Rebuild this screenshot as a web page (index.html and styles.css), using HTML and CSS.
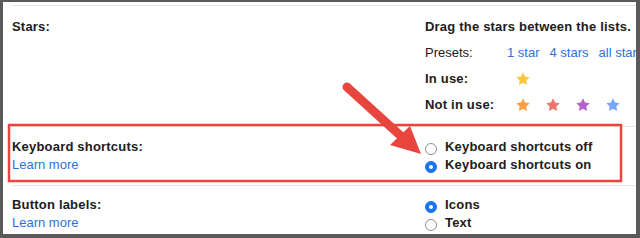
FILE: index.html
```html
<!DOCTYPE html>
<html>
<head>
<meta charset="utf-8">
<link rel="stylesheet" href="styles.css">
</head>
<body>
<div class="frame">
  <div class="panel">
    <section class="section sec-stars">
      <div class="label-col"><span class="title">Stars:</span></div>
      <div class="value-col">
        <div class="row"><span class="title">Drag the stars between the lists.</span></div>
        <div class="row">
          <span class="row-label">Presets:</span>
          <span class="links"><a class="link">1 star</a><a class="link">4 stars</a><a class="link">all stars</a></span>
        </div>
        <div class="row">
          <span class="row-label title">In use:</span>
          <span class="stars">
            <svg class="star" viewBox="0 0 24 24"><path fill="#f8c544" d="M12 2l3.09 6.26L22 9.27l-5 4.87 1.18 6.88L12 17.77l-6.18 3.25L7 14.14 2 9.27l6.91-1.01z"/></svg>
          </span>
        </div>
        <div class="row">
          <span class="row-label title">Not in use:</span>
          <span class="stars">
            <svg class="star" viewBox="0 0 24 24"><path fill="#f9a044" d="M12 2l3.09 6.26L22 9.27l-5 4.87 1.18 6.88L12 17.77l-6.18 3.25L7 14.14 2 9.27l6.91-1.01z"/></svg>
            <svg class="star" viewBox="0 0 24 24"><path fill="#e8776e" d="M12 2l3.09 6.26L22 9.27l-5 4.87 1.18 6.88L12 17.77l-6.18 3.25L7 14.14 2 9.27l6.91-1.01z"/></svg>
            <svg class="star" viewBox="0 0 24 24"><path fill="#b462c9" d="M12 2l3.09 6.26L22 9.27l-5 4.87 1.18 6.88L12 17.77l-6.18 3.25L7 14.14 2 9.27l6.91-1.01z"/></svg>
            <svg class="star" viewBox="0 0 24 24"><path fill="#76a8f6" d="M12 2l3.09 6.26L22 9.27l-5 4.87 1.18 6.88L12 17.77l-6.18 3.25L7 14.14 2 9.27l6.91-1.01z"/></svg>
            <svg class="star" viewBox="0 0 24 24"><path fill="#4fbf84" d="M12 2l3.09 6.26L22 9.27l-5 4.87 1.18 6.88L12 17.77l-6.18 3.25L7 14.14 2 9.27l6.91-1.01z"/></svg>
          </span>
        </div>
      </div>
    </section>
    <section class="section sec-keys">
      <div class="label-col">
        <div class="line title">Keyboard shortcuts:</div>
        <div class="line"><a class="link">Learn more</a></div>
      </div>
      <div class="value-col">
        <div class="option"><span class="radio"></span><span class="title">Keyboard shortcuts off</span></div>
        <div class="option"><span class="radio checked"></span><span class="title">Keyboard shortcuts on</span></div>
      </div>
    </section>
    <section class="section sec-buttons">
      <div class="label-col">
        <div class="line title">Button labels:</div>
        <div class="line"><a class="link">Learn more</a></div>
      </div>
      <div class="value-col">
        <div class="option"><span class="radio checked"></span><span class="title">Icons</span></div>
        <div class="option"><span class="radio"></span><span class="title">Text</span></div>
      </div>
    </section>
  </div>
  <svg class="annotation" width="640" height="238" viewBox="0 0 640 238">
    <rect x="9" y="125" width="612" height="56" fill="none" stroke="#e8453f" stroke-width="2.5"/>
    <line x1="347" y1="87" x2="402" y2="137" stroke="#e8453f" stroke-width="9" stroke-linecap="round"/>
    <polygon points="421,154 390,145 410,126" fill="#e8453f"/>
  </svg>
</div>
</body>
</html>
```

FILE: styles.css
```css
html, body {
  margin: 0;
  padding: 0;
}

body {
  width: 640px;
  height: 238px;
  overflow: hidden;
  font-family: "Liberation Sans", Arial, sans-serif;
  font-size: 13px;
  color: #202020;
}

.frame {
  position: relative;
  box-sizing: border-box;
  width: 640px;
  height: 238px;
  padding: 2px 4px 4px 3px;
  background: #5a5a5a;
}

.panel {
  height: 100%;
  background: #ffffff;
  overflow: hidden;
  padding-top: 3px;
  box-sizing: border-box;
  white-space: nowrap;
}

.section {
  display: flex;
  margin-left: 9px;
  border-top: 1px solid #e6e6e6;
  line-height: 18px;
}

.sec-stars {
  padding: 12px 0 12px;
}

.sec-keys {
  padding: 11px 0 11px;
}

.sec-buttons {
  padding: 10px 0 0;
}

.label-col {
  width: 413px;
  flex: none;
}

.value-col {
  display: flex;
  flex-direction: column;
}

.title {
  font-weight: bold;
  letter-spacing: 0.2px;
}

.link {
  color: #2e6fdb;
}

.row {
  display: flex;
  align-items: center;
  height: 18px;
}

.row + .row {
  margin-top: 8px;
}

.row-label {
  width: 82px;
  flex: none;
}

.links {
  display: flex;
  gap: 10px;
}

.stars {
  display: flex;
  gap: 14px;
  padding-left: 8px;
}

.star {
  width: 16px;
  height: 16px;
  display: block;
}

.option {
  display: flex;
  align-items: flex-start;
  height: 18px;
}

.radio {
  box-sizing: border-box;
  width: 12px;
  height: 12px;
  margin-top: 5px;
  margin-right: 8px;
  border-radius: 50%;
  border: 1px solid #8f8f8f;
  background: #ffffff;
  flex: none;
  position: relative;
}

.radio.checked {
  border-color: #1a74f0;
  background: #1a74f0;
}

.radio.checked::after {
  content: "";
  position: absolute;
  left: 3px;
  top: 3px;
  width: 4px;
  height: 4px;
  border-radius: 50%;
  background: #ffffff;
}

.annotation {
  position: absolute;
  left: 0;
  top: 0;
  pointer-events: none;
}
```
